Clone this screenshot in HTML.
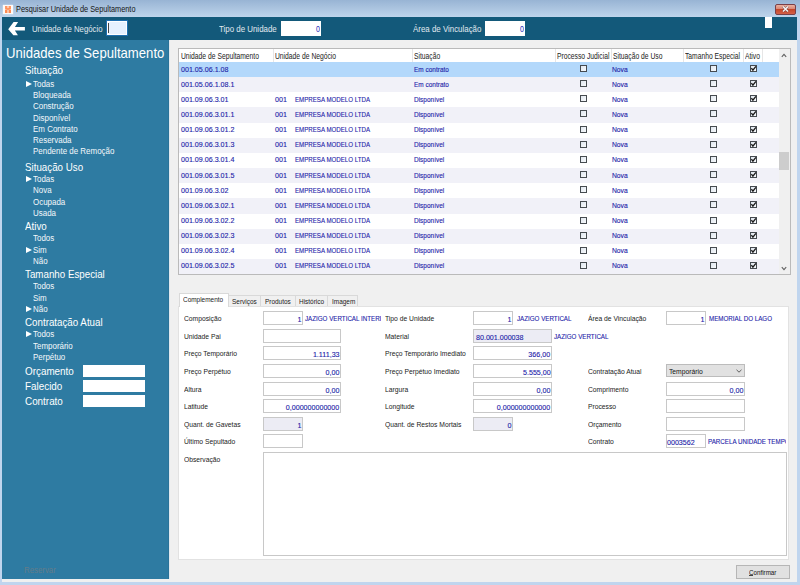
<!DOCTYPE html>
<html><head><meta charset="utf-8"><style>
html,body{margin:0;padding:0;width:800px;height:585px;overflow:hidden;background:#f0f0f0}
body{position:relative;font-family:"Liberation Sans",sans-serif}
.t{position:absolute;white-space:nowrap;font-family:"Liberation Sans",sans-serif}
.b{-webkit-text-stroke:0.12px currentColor}
</style></head><body>
<div style="position:absolute;left:0;top:0;width:800px;height:17px;background:linear-gradient(#98b4d4,#bed4eb)"></div>
<div style="position:absolute;left:0px;top:17px;width:2px;height:568px;background:#c0d5ee"></div>
<div style="position:absolute;left:797px;top:17px;width:3px;height:568px;background:#c0d5ee"></div>
<div style="position:absolute;left:0px;top:582px;width:800px;height:3px;background:#c0d5ee"></div>
<div style="position:absolute;left:3px;top:5px;width:10px;height:9px;background:#fdfaf8;box-shadow:0 0 1px #fff"></div>
<svg style="position:absolute;left:5px;top:6px" width="6" height="7" viewBox="0 0 6 7"><g fill="#ff8040"><rect x="0" y="0" width="2.5" height="3" opacity="0.8"/><rect x="3.5" y="0" width="2.5" height="3" opacity="0.8"/><rect x="0" y="3.5" width="2.5" height="3.5" opacity="0.9"/><rect x="3.5" y="3.5" width="2.5" height="3.5" opacity="0.9"/><rect x="1.5" y="2" width="3" height="2" opacity="0.7"/></g></svg>
<div class="t" style="left:15.8px;top:5.38px;font-size:9px;line-height:9px;color:#151515;transform:scaleX(0.815);transform-origin:0 0;">Pesquisar Unidade de Sepultamento</div>
<div style="position:absolute;left:775px;top:4px;width:19px;height:9px;border:1px solid #7a4048;border-radius:2px;background:linear-gradient(#eab0a0 0%,#dc8a78 40%,#c4472a 50%,#d46048 100%)"></div>
<svg style="position:absolute;left:781px;top:5px" width="9" height="8" viewBox="0 0 9 8"><path d="M2 1.5 L7 6.5 M7 1.5 L2 6.5" stroke="#4a3038" stroke-width="2.6" stroke-linecap="butt" opacity="0.5"/><path d="M2 1.5 L7 6.5 M7 1.5 L2 6.5" stroke="#f4f4f4" stroke-width="1.5" stroke-linecap="butt"/></svg>
<div style="position:absolute;left:2px;top:17px;width:795px;height:23px;background:#13597a"></div>
<svg style="position:absolute;left:0;top:0" width="30" height="40" viewBox="0 0 30 40"><path d="M8.2 29.3 L13.6 22.1 L18.1 22.1 L14.9 27 L24.9 27 L24.9 30.6 L14.9 30.6 L17.9 35.3 L13.4 35.3 Z" fill="#fff"/></svg>
<div class="t" style="left:32px;top:24.80px;font-size:8.5px;line-height:8.5px;color:#e2eaf0;transform:scaleX(0.915);transform-origin:0 0;">Unidade de Negócio</div>
<div style="position:absolute;left:107px;top:21px;width:20px;height:14px;background:#e6f1ff;border:0;box-shadow:inset 0 0 0 1px #fff,0 0 0 1px rgba(40,130,220,0.55)"></div>
<div style="position:absolute;left:108px;top:23px;width:1px;height:10px;background:#444"></div>
<div class="t" style="left:218.5px;top:24.80px;font-size:8.5px;line-height:8.5px;color:#e2eaf0;transform:scaleX(0.93);transform-origin:0 0;">Tipo de Unidade</div>
<div style="position:absolute;left:281px;top:21px;width:40px;height:15px;background:#fff"></div>
<div class="t" style="right:479.7px;top:24.85px;font-size:8.8px;line-height:8.8px;color:#2828b8;transform:scaleX(0.8);transform-origin:100% 0;">0</div>
<div class="t" style="left:412.5px;top:24.80px;font-size:8.5px;line-height:8.5px;color:#e2eaf0;transform:scaleX(0.93);transform-origin:0 0;">Área de Vinculação</div>
<div style="position:absolute;left:485px;top:21px;width:40px;height:15px;background:#fff"></div>
<div class="t" style="right:275.70000000000005px;top:24.85px;font-size:8.8px;line-height:8.8px;color:#2828b8;transform:scaleX(0.8);transform-origin:100% 0;">0</div>
<div style="position:absolute;left:765px;top:17px;width:7px;height:11px;background:#fff"></div>
<div style="position:absolute;left:2px;top:40px;width:167px;height:539px;background:#2e7ba2"></div>
<div style="position:absolute;left:168px;top:40px;width:1px;height:539px;background:#2a7399"></div>
<div style="position:absolute;left:169px;top:40px;width:1px;height:539px;background:#dfe8ee"></div>
<div style="position:absolute;left:2px;top:579px;width:795px;height:3px;background:#f0f0f0"></div>
<div class="t" style="left:6.4px;top:45.78px;font-size:14.2px;line-height:14.2px;color:#fff;transform:scaleX(0.925);transform-origin:0 0;">Unidades de Sepultamento</div>
<div class="t" style="left:24.5px;top:64.81px;font-size:10.5px;line-height:10.5px;color:#fff;transform:scaleX(0.93);transform-origin:0 0;">Situação</div>
<div class="t" style="left:33.1px;top:79.69px;font-size:8.4px;line-height:8.4px;color:#f4f8fb;transform:scaleX(0.95);transform-origin:0 0;">Todas</div>
<svg style="position:absolute;left:26px;top:80.8px" width="6" height="6" viewBox="0 0 6 6"><path d="M0 0 L6 3 L0 6 Z" fill="#fff"/></svg>
<div class="t" style="left:33.1px;top:90.99px;font-size:8.4px;line-height:8.4px;color:#f4f8fb;transform:scaleX(0.95);transform-origin:0 0;">Bloqueada</div>
<div class="t" style="left:33.1px;top:102.29px;font-size:8.4px;line-height:8.4px;color:#f4f8fb;transform:scaleX(0.95);transform-origin:0 0;">Construção</div>
<div class="t" style="left:33.1px;top:113.59px;font-size:8.4px;line-height:8.4px;color:#f4f8fb;transform:scaleX(0.95);transform-origin:0 0;">Disponível</div>
<div class="t" style="left:33.1px;top:124.89px;font-size:8.4px;line-height:8.4px;color:#f4f8fb;transform:scaleX(0.95);transform-origin:0 0;">Em Contrato</div>
<div class="t" style="left:33.1px;top:136.19px;font-size:8.4px;line-height:8.4px;color:#f4f8fb;transform:scaleX(0.95);transform-origin:0 0;">Reservada</div>
<div class="t" style="left:33.1px;top:147.49px;font-size:8.4px;line-height:8.4px;color:#f4f8fb;transform:scaleX(0.95);transform-origin:0 0;">Pendente de Remoção</div>
<div class="t" style="left:24.5px;top:161.81px;font-size:10.5px;line-height:10.5px;color:#fff;transform:scaleX(0.93);transform-origin:0 0;">Situação Uso</div>
<div class="t" style="left:33.1px;top:175.19px;font-size:8.4px;line-height:8.4px;color:#f4f8fb;transform:scaleX(0.95);transform-origin:0 0;">Todas</div>
<svg style="position:absolute;left:26px;top:176.3px" width="6" height="6" viewBox="0 0 6 6"><path d="M0 0 L6 3 L0 6 Z" fill="#fff"/></svg>
<div class="t" style="left:33.1px;top:186.49px;font-size:8.4px;line-height:8.4px;color:#f4f8fb;transform:scaleX(0.95);transform-origin:0 0;">Nova</div>
<div class="t" style="left:33.1px;top:197.79px;font-size:8.4px;line-height:8.4px;color:#f4f8fb;transform:scaleX(0.95);transform-origin:0 0;">Ocupada</div>
<div class="t" style="left:33.1px;top:209.09px;font-size:8.4px;line-height:8.4px;color:#f4f8fb;transform:scaleX(0.95);transform-origin:0 0;">Usada</div>
<div class="t" style="left:24.5px;top:221.31px;font-size:10.5px;line-height:10.5px;color:#fff;transform:scaleX(0.93);transform-origin:0 0;">Ativo</div>
<div class="t" style="left:33.1px;top:234.39px;font-size:8.4px;line-height:8.4px;color:#f4f8fb;transform:scaleX(0.95);transform-origin:0 0;">Todos</div>
<div class="t" style="left:33.1px;top:245.69px;font-size:8.4px;line-height:8.4px;color:#f4f8fb;transform:scaleX(0.95);transform-origin:0 0;">Sim</div>
<svg style="position:absolute;left:26px;top:246.8px" width="6" height="6" viewBox="0 0 6 6"><path d="M0 0 L6 3 L0 6 Z" fill="#fff"/></svg>
<div class="t" style="left:33.1px;top:257.09px;font-size:8.4px;line-height:8.4px;color:#f4f8fb;transform:scaleX(0.95);transform-origin:0 0;">Não</div>
<div class="t" style="left:24.5px;top:269.21px;font-size:10.5px;line-height:10.5px;color:#fff;transform:scaleX(0.93);transform-origin:0 0;">Tamanho Especial</div>
<div class="t" style="left:33.1px;top:282.39px;font-size:8.4px;line-height:8.4px;color:#f4f8fb;transform:scaleX(0.95);transform-origin:0 0;">Todos</div>
<div class="t" style="left:33.1px;top:293.69px;font-size:8.4px;line-height:8.4px;color:#f4f8fb;transform:scaleX(0.95);transform-origin:0 0;">Sim</div>
<div class="t" style="left:33.1px;top:305.09px;font-size:8.4px;line-height:8.4px;color:#f4f8fb;transform:scaleX(0.95);transform-origin:0 0;">Não</div>
<svg style="position:absolute;left:26px;top:306.2px" width="6" height="6" viewBox="0 0 6 6"><path d="M0 0 L6 3 L0 6 Z" fill="#fff"/></svg>
<div class="t" style="left:24.5px;top:317.11px;font-size:10.5px;line-height:10.5px;color:#fff;transform:scaleX(0.93);transform-origin:0 0;">Contratação Atual</div>
<div class="t" style="left:33.1px;top:330.19px;font-size:8.4px;line-height:8.4px;color:#f4f8fb;transform:scaleX(0.95);transform-origin:0 0;">Todos</div>
<svg style="position:absolute;left:26px;top:331.3px" width="6" height="6" viewBox="0 0 6 6"><path d="M0 0 L6 3 L0 6 Z" fill="#fff"/></svg>
<div class="t" style="left:33.1px;top:341.59px;font-size:8.4px;line-height:8.4px;color:#f4f8fb;transform:scaleX(0.95);transform-origin:0 0;">Temporário</div>
<div class="t" style="left:33.1px;top:352.99px;font-size:8.4px;line-height:8.4px;color:#f4f8fb;transform:scaleX(0.95);transform-origin:0 0;">Perpétuo</div>
<div class="t" style="left:24.5px;top:365.61px;font-size:10.5px;line-height:10.5px;color:#fff;transform:scaleX(0.94);transform-origin:0 0;">Orçamento</div>
<div style="position:absolute;left:83px;top:365px;width:62px;height:12px;background:#fff"></div>
<div class="t" style="left:24.5px;top:380.61px;font-size:10.5px;line-height:10.5px;color:#fff;transform:scaleX(0.94);transform-origin:0 0;">Falecido</div>
<div style="position:absolute;left:83px;top:380px;width:62px;height:12px;background:#fff"></div>
<div class="t" style="left:24.5px;top:395.61px;font-size:10.5px;line-height:10.5px;color:#fff;transform:scaleX(0.94);transform-origin:0 0;">Contrato</div>
<div style="position:absolute;left:83px;top:395px;width:62px;height:12px;background:#fff"></div>
<div class="t" style="left:24.3px;top:565.68px;font-size:9px;line-height:9px;color:#637c8a;transform:scaleX(0.87);transform-origin:0 0;">Reservar</div>
<div style="position:absolute;left:170px;top:40px;width:627px;height:539px;background:#f0f0f0"></div>
<div style="position:absolute;left:178px;top:48px;width:613px;height:227px;background:#fff;border:1px solid #bababa;box-sizing:border-box"></div>
<div style="position:absolute;left:273px;top:49px;width:1px;height:13px;background:#e6e6e6"></div>
<div style="position:absolute;left:412px;top:49px;width:1px;height:13px;background:#e6e6e6"></div>
<div style="position:absolute;left:555px;top:49px;width:1px;height:13px;background:#e6e6e6"></div>
<div style="position:absolute;left:611px;top:49px;width:1px;height:13px;background:#e6e6e6"></div>
<div style="position:absolute;left:683px;top:49px;width:1px;height:13px;background:#e6e6e6"></div>
<div style="position:absolute;left:743px;top:49px;width:1px;height:13px;background:#e6e6e6"></div>
<div style="position:absolute;left:762px;top:49px;width:1px;height:13px;background:#e6e6e6"></div>
<div class="t" style="left:181.3px;top:52.22px;font-size:8.6px;line-height:8.6px;color:#222;transform:scaleX(0.7848837209302326);transform-origin:0 0;">Unidade de Sepultamento</div>
<div class="t" style="left:275.3px;top:52.22px;font-size:8.6px;line-height:8.6px;color:#222;transform:scaleX(0.7848837209302326);transform-origin:0 0;">Unidade de Negócio</div>
<div class="t" style="left:414.3px;top:52.22px;font-size:8.6px;line-height:8.6px;color:#222;transform:scaleX(0.7848837209302326);transform-origin:0 0;">Situação</div>
<div class="t" style="left:557.3px;top:52.22px;font-size:8.6px;line-height:8.6px;color:#222;transform:scaleX(0.7848837209302326);transform-origin:0 0;">Processo Judicial</div>
<div class="t" style="left:613.3px;top:52.22px;font-size:8.6px;line-height:8.6px;color:#222;transform:scaleX(0.7848837209302326);transform-origin:0 0;">Situação de Uso</div>
<div class="t" style="left:685.3px;top:52.22px;font-size:8.6px;line-height:8.6px;color:#222;transform:scaleX(0.7848837209302326);transform-origin:0 0;">Tamanho Especial</div>
<div class="t" style="left:745.3px;top:52.22px;font-size:8.6px;line-height:8.6px;color:#222;transform:scaleX(0.7848837209302326);transform-origin:0 0;">Ativo</div>
<div style="position:absolute;left:179px;top:62px;width:600px;height:15px;background:#b3d8fb"></div>
<div class="t b" style="left:180.5px;top:65.51px;font-size:7.9px;line-height:7.9px;color:#2222a8;transform:scaleX(0.9018987341772151);transform-origin:0 0;">001.05.06.1.08</div>
<div class="t b" style="left:413.5px;top:65.51px;font-size:7.9px;line-height:7.9px;color:#2222a8;transform:scaleX(0.8212025316455696);transform-origin:0 0;">Em contrato</div>
<div class="t b" style="left:612px;top:65.51px;font-size:7.9px;line-height:7.9px;color:#2222a8;transform:scaleX(0.8544303797468354);transform-origin:0 0;">Nova</div>
<div style="position:absolute;left:580px;top:65px;width:7px;height:7px;box-sizing:border-box;border:1px solid #464b50;background:linear-gradient(135deg,#dfe6ee,#f8fafc)"></div>
<div style="position:absolute;left:710px;top:65px;width:7px;height:7px;box-sizing:border-box;border:1px solid #464b50;background:linear-gradient(135deg,#dfe6ee,#f8fafc)"></div>
<div style="position:absolute;left:750px;top:65px;width:7px;height:7px;box-sizing:border-box;border:1px solid #464b50;background:linear-gradient(135deg,#dfe6ee,#f8fafc)"></div>
<svg style="position:absolute;left:750px;top:65px" width="7" height="7" viewBox="0 0 7 7"><path d="M1.4 3.2 L2.9 5.1 L5.9 1.3" stroke="#1a1a1a" stroke-width="1.35" fill="none"/></svg>
<div style="position:absolute;left:179px;top:77px;width:600px;height:15px;background:#f1f1f8"></div>
<div class="t b" style="left:180.5px;top:80.66px;font-size:7.9px;line-height:7.9px;color:#2222a8;transform:scaleX(0.9018987341772151);transform-origin:0 0;">001.05.06.1.08.1</div>
<div class="t b" style="left:413.5px;top:80.66px;font-size:7.9px;line-height:7.9px;color:#2222a8;transform:scaleX(0.8212025316455696);transform-origin:0 0;">Em contrato</div>
<div class="t b" style="left:612px;top:80.66px;font-size:7.9px;line-height:7.9px;color:#2222a8;transform:scaleX(0.8544303797468354);transform-origin:0 0;">Nova</div>
<div style="position:absolute;left:580px;top:80px;width:7px;height:7px;box-sizing:border-box;border:1px solid #464b50;background:linear-gradient(135deg,#dfe6ee,#f8fafc)"></div>
<div style="position:absolute;left:710px;top:80px;width:7px;height:7px;box-sizing:border-box;border:1px solid #464b50;background:linear-gradient(135deg,#dfe6ee,#f8fafc)"></div>
<div style="position:absolute;left:750px;top:80px;width:7px;height:7px;box-sizing:border-box;border:1px solid #464b50;background:linear-gradient(135deg,#dfe6ee,#f8fafc)"></div>
<svg style="position:absolute;left:750px;top:80px" width="7" height="7" viewBox="0 0 7 7"><path d="M1.4 3.2 L2.9 5.1 L5.9 1.3" stroke="#1a1a1a" stroke-width="1.35" fill="none"/></svg>
<div style="position:absolute;left:179px;top:92px;width:600px;height:15px;background:#fff"></div>
<div class="t b" style="left:180.5px;top:95.81px;font-size:7.9px;line-height:7.9px;color:#2222a8;transform:scaleX(0.9018987341772151);transform-origin:0 0;">001.09.06.3.01</div>
<div class="t b" style="left:274.5px;top:95.81px;font-size:7.9px;line-height:7.9px;color:#2222a8;transform:scaleX(0.9018987341772151);transform-origin:0 0;">001</div>
<div class="t b" style="left:294.5px;top:95.81px;font-size:7.9px;line-height:7.9px;color:#2222a8;transform:scaleX(0.7784810126582278);transform-origin:0 0;">EMPRESA MODELO LTDA</div>
<div class="t b" style="left:413.5px;top:95.81px;font-size:7.9px;line-height:7.9px;color:#2222a8;transform:scaleX(0.8212025316455696);transform-origin:0 0;">Disponível</div>
<div class="t b" style="left:612px;top:95.81px;font-size:7.9px;line-height:7.9px;color:#2222a8;transform:scaleX(0.8544303797468354);transform-origin:0 0;">Nova</div>
<div style="position:absolute;left:580px;top:95px;width:7px;height:7px;box-sizing:border-box;border:1px solid #464b50;background:linear-gradient(135deg,#dfe6ee,#f8fafc)"></div>
<div style="position:absolute;left:710px;top:95px;width:7px;height:7px;box-sizing:border-box;border:1px solid #464b50;background:linear-gradient(135deg,#dfe6ee,#f8fafc)"></div>
<div style="position:absolute;left:750px;top:95px;width:7px;height:7px;box-sizing:border-box;border:1px solid #464b50;background:linear-gradient(135deg,#dfe6ee,#f8fafc)"></div>
<svg style="position:absolute;left:750px;top:95px" width="7" height="7" viewBox="0 0 7 7"><path d="M1.4 3.2 L2.9 5.1 L5.9 1.3" stroke="#1a1a1a" stroke-width="1.35" fill="none"/></svg>
<div style="position:absolute;left:179px;top:107px;width:600px;height:16px;background:#f1f1f8"></div>
<div class="t b" style="left:180.5px;top:110.96px;font-size:7.9px;line-height:7.9px;color:#2222a8;transform:scaleX(0.9018987341772151);transform-origin:0 0;">001.09.06.3.01.1</div>
<div class="t b" style="left:274.5px;top:110.96px;font-size:7.9px;line-height:7.9px;color:#2222a8;transform:scaleX(0.9018987341772151);transform-origin:0 0;">001</div>
<div class="t b" style="left:294.5px;top:110.96px;font-size:7.9px;line-height:7.9px;color:#2222a8;transform:scaleX(0.7784810126582278);transform-origin:0 0;">EMPRESA MODELO LTDA</div>
<div class="t b" style="left:413.5px;top:110.96px;font-size:7.9px;line-height:7.9px;color:#2222a8;transform:scaleX(0.8212025316455696);transform-origin:0 0;">Disponível</div>
<div class="t b" style="left:612px;top:110.96px;font-size:7.9px;line-height:7.9px;color:#2222a8;transform:scaleX(0.8544303797468354);transform-origin:0 0;">Nova</div>
<div style="position:absolute;left:580px;top:110px;width:7px;height:7px;box-sizing:border-box;border:1px solid #464b50;background:linear-gradient(135deg,#dfe6ee,#f8fafc)"></div>
<div style="position:absolute;left:710px;top:110px;width:7px;height:7px;box-sizing:border-box;border:1px solid #464b50;background:linear-gradient(135deg,#dfe6ee,#f8fafc)"></div>
<div style="position:absolute;left:750px;top:110px;width:7px;height:7px;box-sizing:border-box;border:1px solid #464b50;background:linear-gradient(135deg,#dfe6ee,#f8fafc)"></div>
<svg style="position:absolute;left:750px;top:110px" width="7" height="7" viewBox="0 0 7 7"><path d="M1.4 3.2 L2.9 5.1 L5.9 1.3" stroke="#1a1a1a" stroke-width="1.35" fill="none"/></svg>
<div style="position:absolute;left:179px;top:123px;width:600px;height:15px;background:#fff"></div>
<div class="t b" style="left:180.5px;top:126.11px;font-size:7.9px;line-height:7.9px;color:#2222a8;transform:scaleX(0.9018987341772151);transform-origin:0 0;">001.09.06.3.01.2</div>
<div class="t b" style="left:274.5px;top:126.11px;font-size:7.9px;line-height:7.9px;color:#2222a8;transform:scaleX(0.9018987341772151);transform-origin:0 0;">001</div>
<div class="t b" style="left:294.5px;top:126.11px;font-size:7.9px;line-height:7.9px;color:#2222a8;transform:scaleX(0.7784810126582278);transform-origin:0 0;">EMPRESA MODELO LTDA</div>
<div class="t b" style="left:413.5px;top:126.11px;font-size:7.9px;line-height:7.9px;color:#2222a8;transform:scaleX(0.8212025316455696);transform-origin:0 0;">Disponível</div>
<div class="t b" style="left:612px;top:126.11px;font-size:7.9px;line-height:7.9px;color:#2222a8;transform:scaleX(0.8544303797468354);transform-origin:0 0;">Nova</div>
<div style="position:absolute;left:580px;top:126px;width:7px;height:7px;box-sizing:border-box;border:1px solid #464b50;background:linear-gradient(135deg,#dfe6ee,#f8fafc)"></div>
<div style="position:absolute;left:710px;top:126px;width:7px;height:7px;box-sizing:border-box;border:1px solid #464b50;background:linear-gradient(135deg,#dfe6ee,#f8fafc)"></div>
<div style="position:absolute;left:750px;top:126px;width:7px;height:7px;box-sizing:border-box;border:1px solid #464b50;background:linear-gradient(135deg,#dfe6ee,#f8fafc)"></div>
<svg style="position:absolute;left:750px;top:126px" width="7" height="7" viewBox="0 0 7 7"><path d="M1.4 3.2 L2.9 5.1 L5.9 1.3" stroke="#1a1a1a" stroke-width="1.35" fill="none"/></svg>
<div style="position:absolute;left:179px;top:138px;width:600px;height:15px;background:#f1f1f8"></div>
<div class="t b" style="left:180.5px;top:141.26px;font-size:7.9px;line-height:7.9px;color:#2222a8;transform:scaleX(0.9018987341772151);transform-origin:0 0;">001.09.06.3.01.3</div>
<div class="t b" style="left:274.5px;top:141.26px;font-size:7.9px;line-height:7.9px;color:#2222a8;transform:scaleX(0.9018987341772151);transform-origin:0 0;">001</div>
<div class="t b" style="left:294.5px;top:141.26px;font-size:7.9px;line-height:7.9px;color:#2222a8;transform:scaleX(0.7784810126582278);transform-origin:0 0;">EMPRESA MODELO LTDA</div>
<div class="t b" style="left:413.5px;top:141.26px;font-size:7.9px;line-height:7.9px;color:#2222a8;transform:scaleX(0.8212025316455696);transform-origin:0 0;">Disponível</div>
<div class="t b" style="left:612px;top:141.26px;font-size:7.9px;line-height:7.9px;color:#2222a8;transform:scaleX(0.8544303797468354);transform-origin:0 0;">Nova</div>
<div style="position:absolute;left:580px;top:141px;width:7px;height:7px;box-sizing:border-box;border:1px solid #464b50;background:linear-gradient(135deg,#dfe6ee,#f8fafc)"></div>
<div style="position:absolute;left:710px;top:141px;width:7px;height:7px;box-sizing:border-box;border:1px solid #464b50;background:linear-gradient(135deg,#dfe6ee,#f8fafc)"></div>
<div style="position:absolute;left:750px;top:141px;width:7px;height:7px;box-sizing:border-box;border:1px solid #464b50;background:linear-gradient(135deg,#dfe6ee,#f8fafc)"></div>
<svg style="position:absolute;left:750px;top:141px" width="7" height="7" viewBox="0 0 7 7"><path d="M1.4 3.2 L2.9 5.1 L5.9 1.3" stroke="#1a1a1a" stroke-width="1.35" fill="none"/></svg>
<div style="position:absolute;left:179px;top:153px;width:600px;height:15px;background:#fff"></div>
<div class="t b" style="left:180.5px;top:156.41px;font-size:7.9px;line-height:7.9px;color:#2222a8;transform:scaleX(0.9018987341772151);transform-origin:0 0;">001.09.06.3.01.4</div>
<div class="t b" style="left:274.5px;top:156.41px;font-size:7.9px;line-height:7.9px;color:#2222a8;transform:scaleX(0.9018987341772151);transform-origin:0 0;">001</div>
<div class="t b" style="left:294.5px;top:156.41px;font-size:7.9px;line-height:7.9px;color:#2222a8;transform:scaleX(0.7784810126582278);transform-origin:0 0;">EMPRESA MODELO LTDA</div>
<div class="t b" style="left:413.5px;top:156.41px;font-size:7.9px;line-height:7.9px;color:#2222a8;transform:scaleX(0.8212025316455696);transform-origin:0 0;">Disponível</div>
<div class="t b" style="left:612px;top:156.41px;font-size:7.9px;line-height:7.9px;color:#2222a8;transform:scaleX(0.8544303797468354);transform-origin:0 0;">Nova</div>
<div style="position:absolute;left:580px;top:156px;width:7px;height:7px;box-sizing:border-box;border:1px solid #464b50;background:linear-gradient(135deg,#dfe6ee,#f8fafc)"></div>
<div style="position:absolute;left:710px;top:156px;width:7px;height:7px;box-sizing:border-box;border:1px solid #464b50;background:linear-gradient(135deg,#dfe6ee,#f8fafc)"></div>
<div style="position:absolute;left:750px;top:156px;width:7px;height:7px;box-sizing:border-box;border:1px solid #464b50;background:linear-gradient(135deg,#dfe6ee,#f8fafc)"></div>
<svg style="position:absolute;left:750px;top:156px" width="7" height="7" viewBox="0 0 7 7"><path d="M1.4 3.2 L2.9 5.1 L5.9 1.3" stroke="#1a1a1a" stroke-width="1.35" fill="none"/></svg>
<div style="position:absolute;left:179px;top:168px;width:600px;height:15px;background:#f1f1f8"></div>
<div class="t b" style="left:180.5px;top:171.56px;font-size:7.9px;line-height:7.9px;color:#2222a8;transform:scaleX(0.9018987341772151);transform-origin:0 0;">001.09.06.3.01.5</div>
<div class="t b" style="left:274.5px;top:171.56px;font-size:7.9px;line-height:7.9px;color:#2222a8;transform:scaleX(0.9018987341772151);transform-origin:0 0;">001</div>
<div class="t b" style="left:294.5px;top:171.56px;font-size:7.9px;line-height:7.9px;color:#2222a8;transform:scaleX(0.7784810126582278);transform-origin:0 0;">EMPRESA MODELO LTDA</div>
<div class="t b" style="left:413.5px;top:171.56px;font-size:7.9px;line-height:7.9px;color:#2222a8;transform:scaleX(0.8212025316455696);transform-origin:0 0;">Disponível</div>
<div class="t b" style="left:612px;top:171.56px;font-size:7.9px;line-height:7.9px;color:#2222a8;transform:scaleX(0.8544303797468354);transform-origin:0 0;">Nova</div>
<div style="position:absolute;left:580px;top:171px;width:7px;height:7px;box-sizing:border-box;border:1px solid #464b50;background:linear-gradient(135deg,#dfe6ee,#f8fafc)"></div>
<div style="position:absolute;left:710px;top:171px;width:7px;height:7px;box-sizing:border-box;border:1px solid #464b50;background:linear-gradient(135deg,#dfe6ee,#f8fafc)"></div>
<div style="position:absolute;left:750px;top:171px;width:7px;height:7px;box-sizing:border-box;border:1px solid #464b50;background:linear-gradient(135deg,#dfe6ee,#f8fafc)"></div>
<svg style="position:absolute;left:750px;top:171px" width="7" height="7" viewBox="0 0 7 7"><path d="M1.4 3.2 L2.9 5.1 L5.9 1.3" stroke="#1a1a1a" stroke-width="1.35" fill="none"/></svg>
<div style="position:absolute;left:179px;top:183px;width:600px;height:15px;background:#fff"></div>
<div class="t b" style="left:180.5px;top:186.71px;font-size:7.9px;line-height:7.9px;color:#2222a8;transform:scaleX(0.9018987341772151);transform-origin:0 0;">001.09.06.3.02</div>
<div class="t b" style="left:274.5px;top:186.71px;font-size:7.9px;line-height:7.9px;color:#2222a8;transform:scaleX(0.9018987341772151);transform-origin:0 0;">001</div>
<div class="t b" style="left:294.5px;top:186.71px;font-size:7.9px;line-height:7.9px;color:#2222a8;transform:scaleX(0.7784810126582278);transform-origin:0 0;">EMPRESA MODELO LTDA</div>
<div class="t b" style="left:413.5px;top:186.71px;font-size:7.9px;line-height:7.9px;color:#2222a8;transform:scaleX(0.8212025316455696);transform-origin:0 0;">Disponível</div>
<div class="t b" style="left:612px;top:186.71px;font-size:7.9px;line-height:7.9px;color:#2222a8;transform:scaleX(0.8544303797468354);transform-origin:0 0;">Nova</div>
<div style="position:absolute;left:580px;top:186px;width:7px;height:7px;box-sizing:border-box;border:1px solid #464b50;background:linear-gradient(135deg,#dfe6ee,#f8fafc)"></div>
<div style="position:absolute;left:710px;top:186px;width:7px;height:7px;box-sizing:border-box;border:1px solid #464b50;background:linear-gradient(135deg,#dfe6ee,#f8fafc)"></div>
<div style="position:absolute;left:750px;top:186px;width:7px;height:7px;box-sizing:border-box;border:1px solid #464b50;background:linear-gradient(135deg,#dfe6ee,#f8fafc)"></div>
<svg style="position:absolute;left:750px;top:186px" width="7" height="7" viewBox="0 0 7 7"><path d="M1.4 3.2 L2.9 5.1 L5.9 1.3" stroke="#1a1a1a" stroke-width="1.35" fill="none"/></svg>
<div style="position:absolute;left:179px;top:198px;width:600px;height:16px;background:#f1f1f8"></div>
<div class="t b" style="left:180.5px;top:201.86px;font-size:7.9px;line-height:7.9px;color:#2222a8;transform:scaleX(0.9018987341772151);transform-origin:0 0;">001.09.06.3.02.1</div>
<div class="t b" style="left:274.5px;top:201.86px;font-size:7.9px;line-height:7.9px;color:#2222a8;transform:scaleX(0.9018987341772151);transform-origin:0 0;">001</div>
<div class="t b" style="left:294.5px;top:201.86px;font-size:7.9px;line-height:7.9px;color:#2222a8;transform:scaleX(0.7784810126582278);transform-origin:0 0;">EMPRESA MODELO LTDA</div>
<div class="t b" style="left:413.5px;top:201.86px;font-size:7.9px;line-height:7.9px;color:#2222a8;transform:scaleX(0.8212025316455696);transform-origin:0 0;">Disponível</div>
<div class="t b" style="left:612px;top:201.86px;font-size:7.9px;line-height:7.9px;color:#2222a8;transform:scaleX(0.8544303797468354);transform-origin:0 0;">Nova</div>
<div style="position:absolute;left:580px;top:201px;width:7px;height:7px;box-sizing:border-box;border:1px solid #464b50;background:linear-gradient(135deg,#dfe6ee,#f8fafc)"></div>
<div style="position:absolute;left:710px;top:201px;width:7px;height:7px;box-sizing:border-box;border:1px solid #464b50;background:linear-gradient(135deg,#dfe6ee,#f8fafc)"></div>
<div style="position:absolute;left:750px;top:201px;width:7px;height:7px;box-sizing:border-box;border:1px solid #464b50;background:linear-gradient(135deg,#dfe6ee,#f8fafc)"></div>
<svg style="position:absolute;left:750px;top:201px" width="7" height="7" viewBox="0 0 7 7"><path d="M1.4 3.2 L2.9 5.1 L5.9 1.3" stroke="#1a1a1a" stroke-width="1.35" fill="none"/></svg>
<div style="position:absolute;left:179px;top:214px;width:600px;height:15px;background:#fff"></div>
<div class="t b" style="left:180.5px;top:217.01px;font-size:7.9px;line-height:7.9px;color:#2222a8;transform:scaleX(0.9018987341772151);transform-origin:0 0;">001.09.06.3.02.2</div>
<div class="t b" style="left:274.5px;top:217.01px;font-size:7.9px;line-height:7.9px;color:#2222a8;transform:scaleX(0.9018987341772151);transform-origin:0 0;">001</div>
<div class="t b" style="left:294.5px;top:217.01px;font-size:7.9px;line-height:7.9px;color:#2222a8;transform:scaleX(0.7784810126582278);transform-origin:0 0;">EMPRESA MODELO LTDA</div>
<div class="t b" style="left:413.5px;top:217.01px;font-size:7.9px;line-height:7.9px;color:#2222a8;transform:scaleX(0.8212025316455696);transform-origin:0 0;">Disponível</div>
<div class="t b" style="left:612px;top:217.01px;font-size:7.9px;line-height:7.9px;color:#2222a8;transform:scaleX(0.8544303797468354);transform-origin:0 0;">Nova</div>
<div style="position:absolute;left:580px;top:217px;width:7px;height:7px;box-sizing:border-box;border:1px solid #464b50;background:linear-gradient(135deg,#dfe6ee,#f8fafc)"></div>
<div style="position:absolute;left:710px;top:217px;width:7px;height:7px;box-sizing:border-box;border:1px solid #464b50;background:linear-gradient(135deg,#dfe6ee,#f8fafc)"></div>
<div style="position:absolute;left:750px;top:217px;width:7px;height:7px;box-sizing:border-box;border:1px solid #464b50;background:linear-gradient(135deg,#dfe6ee,#f8fafc)"></div>
<svg style="position:absolute;left:750px;top:217px" width="7" height="7" viewBox="0 0 7 7"><path d="M1.4 3.2 L2.9 5.1 L5.9 1.3" stroke="#1a1a1a" stroke-width="1.35" fill="none"/></svg>
<div style="position:absolute;left:179px;top:229px;width:600px;height:15px;background:#f1f1f8"></div>
<div class="t b" style="left:180.5px;top:232.16px;font-size:7.9px;line-height:7.9px;color:#2222a8;transform:scaleX(0.9018987341772151);transform-origin:0 0;">001.09.06.3.02.3</div>
<div class="t b" style="left:274.5px;top:232.16px;font-size:7.9px;line-height:7.9px;color:#2222a8;transform:scaleX(0.9018987341772151);transform-origin:0 0;">001</div>
<div class="t b" style="left:294.5px;top:232.16px;font-size:7.9px;line-height:7.9px;color:#2222a8;transform:scaleX(0.7784810126582278);transform-origin:0 0;">EMPRESA MODELO LTDA</div>
<div class="t b" style="left:413.5px;top:232.16px;font-size:7.9px;line-height:7.9px;color:#2222a8;transform:scaleX(0.8212025316455696);transform-origin:0 0;">Disponível</div>
<div class="t b" style="left:612px;top:232.16px;font-size:7.9px;line-height:7.9px;color:#2222a8;transform:scaleX(0.8544303797468354);transform-origin:0 0;">Nova</div>
<div style="position:absolute;left:580px;top:232px;width:7px;height:7px;box-sizing:border-box;border:1px solid #464b50;background:linear-gradient(135deg,#dfe6ee,#f8fafc)"></div>
<div style="position:absolute;left:710px;top:232px;width:7px;height:7px;box-sizing:border-box;border:1px solid #464b50;background:linear-gradient(135deg,#dfe6ee,#f8fafc)"></div>
<div style="position:absolute;left:750px;top:232px;width:7px;height:7px;box-sizing:border-box;border:1px solid #464b50;background:linear-gradient(135deg,#dfe6ee,#f8fafc)"></div>
<svg style="position:absolute;left:750px;top:232px" width="7" height="7" viewBox="0 0 7 7"><path d="M1.4 3.2 L2.9 5.1 L5.9 1.3" stroke="#1a1a1a" stroke-width="1.35" fill="none"/></svg>
<div style="position:absolute;left:179px;top:244px;width:600px;height:15px;background:#fff"></div>
<div class="t b" style="left:180.5px;top:247.31px;font-size:7.9px;line-height:7.9px;color:#2222a8;transform:scaleX(0.9018987341772151);transform-origin:0 0;">001.09.06.3.02.4</div>
<div class="t b" style="left:274.5px;top:247.31px;font-size:7.9px;line-height:7.9px;color:#2222a8;transform:scaleX(0.9018987341772151);transform-origin:0 0;">001</div>
<div class="t b" style="left:294.5px;top:247.31px;font-size:7.9px;line-height:7.9px;color:#2222a8;transform:scaleX(0.7784810126582278);transform-origin:0 0;">EMPRESA MODELO LTDA</div>
<div class="t b" style="left:413.5px;top:247.31px;font-size:7.9px;line-height:7.9px;color:#2222a8;transform:scaleX(0.8212025316455696);transform-origin:0 0;">Disponível</div>
<div class="t b" style="left:612px;top:247.31px;font-size:7.9px;line-height:7.9px;color:#2222a8;transform:scaleX(0.8544303797468354);transform-origin:0 0;">Nova</div>
<div style="position:absolute;left:580px;top:247px;width:7px;height:7px;box-sizing:border-box;border:1px solid #464b50;background:linear-gradient(135deg,#dfe6ee,#f8fafc)"></div>
<div style="position:absolute;left:710px;top:247px;width:7px;height:7px;box-sizing:border-box;border:1px solid #464b50;background:linear-gradient(135deg,#dfe6ee,#f8fafc)"></div>
<div style="position:absolute;left:750px;top:247px;width:7px;height:7px;box-sizing:border-box;border:1px solid #464b50;background:linear-gradient(135deg,#dfe6ee,#f8fafc)"></div>
<svg style="position:absolute;left:750px;top:247px" width="7" height="7" viewBox="0 0 7 7"><path d="M1.4 3.2 L2.9 5.1 L5.9 1.3" stroke="#1a1a1a" stroke-width="1.35" fill="none"/></svg>
<div style="position:absolute;left:179px;top:259px;width:600px;height:15px;background:#f1f1f8"></div>
<div class="t b" style="left:180.5px;top:262.46px;font-size:7.9px;line-height:7.9px;color:#2222a8;transform:scaleX(0.9018987341772151);transform-origin:0 0;">001.09.06.3.02.5</div>
<div class="t b" style="left:274.5px;top:262.46px;font-size:7.9px;line-height:7.9px;color:#2222a8;transform:scaleX(0.9018987341772151);transform-origin:0 0;">001</div>
<div class="t b" style="left:294.5px;top:262.46px;font-size:7.9px;line-height:7.9px;color:#2222a8;transform:scaleX(0.7784810126582278);transform-origin:0 0;">EMPRESA MODELO LTDA</div>
<div class="t b" style="left:413.5px;top:262.46px;font-size:7.9px;line-height:7.9px;color:#2222a8;transform:scaleX(0.8212025316455696);transform-origin:0 0;">Disponível</div>
<div class="t b" style="left:612px;top:262.46px;font-size:7.9px;line-height:7.9px;color:#2222a8;transform:scaleX(0.8544303797468354);transform-origin:0 0;">Nova</div>
<div style="position:absolute;left:580px;top:262px;width:7px;height:7px;box-sizing:border-box;border:1px solid #464b50;background:linear-gradient(135deg,#dfe6ee,#f8fafc)"></div>
<div style="position:absolute;left:710px;top:262px;width:7px;height:7px;box-sizing:border-box;border:1px solid #464b50;background:linear-gradient(135deg,#dfe6ee,#f8fafc)"></div>
<div style="position:absolute;left:750px;top:262px;width:7px;height:7px;box-sizing:border-box;border:1px solid #464b50;background:linear-gradient(135deg,#dfe6ee,#f8fafc)"></div>
<svg style="position:absolute;left:750px;top:262px" width="7" height="7" viewBox="0 0 7 7"><path d="M1.4 3.2 L2.9 5.1 L5.9 1.3" stroke="#1a1a1a" stroke-width="1.35" fill="none"/></svg>
<div style="position:absolute;left:779px;top:49px;width:11px;height:225px;background:#f0f0f0"></div>
<div style="position:absolute;left:779px;top:152px;width:10px;height:18px;background:#cdcdcd"></div>
<svg style="position:absolute;left:781px;top:53px" width="6" height="5" viewBox="0 0 6 5"><path d="M0.8 3.8 L3 1.4 L5.2 3.8" stroke="#606060" stroke-width="1.1" fill="none"/></svg>
<svg style="position:absolute;left:781px;top:266px" width="6" height="5" viewBox="0 0 6 5"><path d="M0.8 1.2 L3 3.6 L5.2 1.2" stroke="#606060" stroke-width="1.1" fill="none"/></svg>
<div style="position:absolute;left:178px;top:306px;width:611px;height:254px;background:#fff;border:1px solid #e2e2e2;box-sizing:border-box"></div>
<div style="position:absolute;left:228px;top:295px;width:32px;height:11px;background:#f0f0f0;border-left:1px solid #d9d9d9;border-top:1px solid #d9d9d9;box-sizing:border-box"></div>
<div class="t" style="left:231.5px;top:297.81px;font-size:7.9px;line-height:7.9px;color:#222;transform:scaleX(0.8164556962025317);transform-origin:0 0;">Serviços</div>
<div style="position:absolute;left:260px;top:295px;width:35px;height:11px;background:#f0f0f0;border-left:1px solid #d9d9d9;border-top:1px solid #d9d9d9;box-sizing:border-box"></div>
<div class="t" style="left:264.5px;top:297.81px;font-size:7.9px;line-height:7.9px;color:#222;transform:scaleX(0.8164556962025317);transform-origin:0 0;">Produtos</div>
<div style="position:absolute;left:295px;top:295px;width:32px;height:11px;background:#f0f0f0;border-left:1px solid #d9d9d9;border-top:1px solid #d9d9d9;box-sizing:border-box"></div>
<div class="t" style="left:298.5px;top:297.81px;font-size:7.9px;line-height:7.9px;color:#222;transform:scaleX(0.8164556962025317);transform-origin:0 0;">Histórico</div>
<div style="position:absolute;left:327px;top:295px;width:31px;height:11px;background:#f0f0f0;border-left:1px solid #d9d9d9;border-top:1px solid #d9d9d9;border-right:1px solid #d9d9d9;box-sizing:border-box"></div>
<div class="t" style="left:331.5px;top:297.81px;font-size:7.9px;line-height:7.9px;color:#222;transform:scaleX(0.8164556962025317);transform-origin:0 0;">Imagem</div>
<div style="position:absolute;left:179px;top:293px;width:50px;height:14px;background:#fff;border:1px solid #d9d9d9;border-bottom:0;box-sizing:border-box"></div>
<div class="t" style="left:183px;top:296.31px;font-size:7.9px;line-height:7.9px;color:#222;transform:scaleX(0.8164556962025317);transform-origin:0 0;">Complemento</div>
<div class="t" style="left:184px;top:315.31px;font-size:7.9px;line-height:7.9px;color:#222;transform:scaleX(0.8544303797468354);transform-origin:0 0;">Composição</div>
<div class="t" style="left:184px;top:333.31px;font-size:7.9px;line-height:7.9px;color:#222;transform:scaleX(0.8544303797468354);transform-origin:0 0;">Unidade Pai</div>
<div class="t" style="left:184px;top:350.31px;font-size:7.9px;line-height:7.9px;color:#222;transform:scaleX(0.8544303797468354);transform-origin:0 0;">Preço Temporário</div>
<div class="t" style="left:184px;top:368.31px;font-size:7.9px;line-height:7.9px;color:#222;transform:scaleX(0.8544303797468354);transform-origin:0 0;">Preço Perpétuo</div>
<div class="t" style="left:184px;top:386.31px;font-size:7.9px;line-height:7.9px;color:#222;transform:scaleX(0.8544303797468354);transform-origin:0 0;">Altura</div>
<div class="t" style="left:184px;top:403.31px;font-size:7.9px;line-height:7.9px;color:#222;transform:scaleX(0.8544303797468354);transform-origin:0 0;">Latitude</div>
<div class="t" style="left:184px;top:421.31px;font-size:7.9px;line-height:7.9px;color:#222;transform:scaleX(0.8544303797468354);transform-origin:0 0;">Quant. de Gavetas</div>
<div class="t" style="left:184px;top:438.31px;font-size:7.9px;line-height:7.9px;color:#222;transform:scaleX(0.8544303797468354);transform-origin:0 0;">Último Sepultado</div>
<div style="position:absolute;left:263px;top:311px;width:40px;height:14px;background:#fff;border:1px solid #c8c8c8;box-sizing:border-box"></div>
<div class="t b" style="right:499px;top:315.61px;font-size:7.9px;line-height:7.9px;color:#2222a8;transform:scaleX(0.9018987341772151);transform-origin:100% 0;">1</div>
<div style="position:absolute;left:304px;top:300px;width:77px;height:30px;overflow:hidden">
<div class="t b" style="left:0.5px;top:15.31px;font-size:7.9px;line-height:7.9px;color:#2222a8;transform:scaleX(0.7879746835443037);transform-origin:0 0;">JAZIGO VERTICAL INTERIOR</div>
</div>
<div style="position:absolute;left:263px;top:329px;width:78px;height:14px;background:#fff;border:1px solid #c8c8c8;box-sizing:border-box"></div>
<div style="position:absolute;left:263px;top:346px;width:78px;height:14px;background:#fff;border:1px solid #c8c8c8;box-sizing:border-box"></div>
<div class="t b" style="right:460.5px;top:350.61px;font-size:7.9px;line-height:7.9px;color:#2222a8;transform:scaleX(0.9018987341772151);transform-origin:100% 0;">1.111,33</div>
<div style="position:absolute;left:263px;top:364px;width:78px;height:14px;background:#fff;border:1px solid #c8c8c8;box-sizing:border-box"></div>
<div class="t b" style="right:460.5px;top:368.61px;font-size:7.9px;line-height:7.9px;color:#2222a8;transform:scaleX(0.9018987341772151);transform-origin:100% 0;">0,00</div>
<div style="position:absolute;left:263px;top:382px;width:78px;height:14px;background:#fff;border:1px solid #c8c8c8;box-sizing:border-box"></div>
<div class="t b" style="right:460.5px;top:386.61px;font-size:7.9px;line-height:7.9px;color:#2222a8;transform:scaleX(0.9018987341772151);transform-origin:100% 0;">0,00</div>
<div style="position:absolute;left:263px;top:399px;width:78px;height:14px;background:#fff;border:1px solid #c8c8c8;box-sizing:border-box"></div>
<div class="t b" style="right:460.5px;top:403.61px;font-size:7.9px;line-height:7.9px;color:#2222a8;transform:scaleX(0.9018987341772151);transform-origin:100% 0;">0,000000000000</div>
<div style="position:absolute;left:263px;top:417px;width:40px;height:14px;background:#ececf4;border:1px solid #c8c8c8;box-sizing:border-box"></div>
<div class="t b" style="right:499px;top:421.61px;font-size:7.9px;line-height:7.9px;color:#2222a8;transform:scaleX(0.9018987341772151);transform-origin:100% 0;">1</div>
<div style="position:absolute;left:263px;top:434px;width:40px;height:14px;background:#fff;border:1px solid #c8c8c8;box-sizing:border-box"></div>
<div class="t" style="left:385px;top:315.31px;font-size:7.9px;line-height:7.9px;color:#222;transform:scaleX(0.8544303797468354);transform-origin:0 0;">Tipo de Unidade</div>
<div class="t" style="left:385px;top:333.31px;font-size:7.9px;line-height:7.9px;color:#222;transform:scaleX(0.8544303797468354);transform-origin:0 0;">Material</div>
<div class="t" style="left:385px;top:350.31px;font-size:7.9px;line-height:7.9px;color:#222;transform:scaleX(0.8544303797468354);transform-origin:0 0;">Preço Temporário Imediato</div>
<div class="t" style="left:385px;top:368.31px;font-size:7.9px;line-height:7.9px;color:#222;transform:scaleX(0.8544303797468354);transform-origin:0 0;">Preço Perpétuo Imediato</div>
<div class="t" style="left:385px;top:386.31px;font-size:7.9px;line-height:7.9px;color:#222;transform:scaleX(0.8544303797468354);transform-origin:0 0;">Largura</div>
<div class="t" style="left:385px;top:403.31px;font-size:7.9px;line-height:7.9px;color:#222;transform:scaleX(0.8544303797468354);transform-origin:0 0;">Longitude</div>
<div class="t" style="left:385px;top:421.31px;font-size:7.9px;line-height:7.9px;color:#222;transform:scaleX(0.8544303797468354);transform-origin:0 0;">Quant. de Restos Mortais</div>
<div style="position:absolute;left:473px;top:311px;width:40px;height:14px;background:#fff;border:1px solid #c8c8c8;box-sizing:border-box"></div>
<div class="t b" style="right:288.5px;top:315.61px;font-size:7.9px;line-height:7.9px;color:#2222a8;transform:scaleX(0.9018987341772151);transform-origin:100% 0;">1</div>
<div class="t b" style="left:516.5px;top:315.31px;font-size:7.9px;line-height:7.9px;color:#2222a8;transform:scaleX(0.7879746835443037);transform-origin:0 0;">JAZIGO VERTICAL</div>
<div style="position:absolute;left:473px;top:329px;width:79px;height:14px;background:#ececf4;border:1px solid #c8c8c8;box-sizing:border-box"></div>
<div class="t b" style="left:475.5px;top:333.61px;font-size:7.9px;line-height:7.9px;color:#2222a8;transform:scaleX(0.9018987341772151);transform-origin:0 0;">80.001.000038</div>
<div class="t b" style="left:554px;top:333.31px;font-size:7.9px;line-height:7.9px;color:#2222a8;transform:scaleX(0.7879746835443037);transform-origin:0 0;">JAZIGO VERTICAL</div>
<div style="position:absolute;left:473px;top:346px;width:79px;height:14px;background:#fff;border:1px solid #c8c8c8;box-sizing:border-box"></div>
<div class="t b" style="right:249.5px;top:350.61px;font-size:7.9px;line-height:7.9px;color:#2222a8;transform:scaleX(0.9018987341772151);transform-origin:100% 0;">366,00</div>
<div style="position:absolute;left:473px;top:364px;width:79px;height:14px;background:#fff;border:1px solid #c8c8c8;box-sizing:border-box"></div>
<div class="t b" style="right:249.5px;top:368.61px;font-size:7.9px;line-height:7.9px;color:#2222a8;transform:scaleX(0.9018987341772151);transform-origin:100% 0;">5.555,00</div>
<div style="position:absolute;left:473px;top:382px;width:79px;height:14px;background:#fff;border:1px solid #c8c8c8;box-sizing:border-box"></div>
<div class="t b" style="right:249.5px;top:386.61px;font-size:7.9px;line-height:7.9px;color:#2222a8;transform:scaleX(0.9018987341772151);transform-origin:100% 0;">0,00</div>
<div style="position:absolute;left:473px;top:399px;width:79px;height:14px;background:#fff;border:1px solid #c8c8c8;box-sizing:border-box"></div>
<div class="t b" style="right:249.5px;top:403.61px;font-size:7.9px;line-height:7.9px;color:#2222a8;transform:scaleX(0.9018987341772151);transform-origin:100% 0;">0,000000000000</div>
<div style="position:absolute;left:473px;top:417px;width:40px;height:14px;background:#ececf4;border:1px solid #c8c8c8;box-sizing:border-box"></div>
<div class="t b" style="right:288.5px;top:421.61px;font-size:7.9px;line-height:7.9px;color:#2222a8;transform:scaleX(0.9018987341772151);transform-origin:100% 0;">0</div>
<div class="t" style="left:587.5px;top:315.31px;font-size:7.9px;line-height:7.9px;color:#222;transform:scaleX(0.8544303797468354);transform-origin:0 0;">Área de Vinculação</div>
<div style="position:absolute;left:666px;top:311px;width:40px;height:14px;background:#fff;border:1px solid #c8c8c8;box-sizing:border-box"></div>
<div class="t b" style="right:95.5px;top:315.61px;font-size:7.9px;line-height:7.9px;color:#2222a8;transform:scaleX(0.9018987341772151);transform-origin:100% 0;">1</div>
<div class="t b" style="left:708.5px;top:315.31px;font-size:7.9px;line-height:7.9px;color:#2222a8;transform:scaleX(0.7879746835443037);transform-origin:0 0;">MEMORIAL DO LAGO</div>
<div class="t" style="left:587.5px;top:368.31px;font-size:7.9px;line-height:7.9px;color:#222;transform:scaleX(0.8544303797468354);transform-origin:0 0;">Contratação Atual</div>
<div style="position:absolute;left:666px;top:364px;width:79px;height:13px;background:#e1e1e1;border:1px solid #bcbcbc;box-sizing:border-box"></div>
<div class="t" style="left:669px;top:368.31px;font-size:7.9px;line-height:7.9px;color:#111;transform:scaleX(0.8544303797468354);transform-origin:0 0;">Temporário</div>
<svg style="position:absolute;left:736px;top:369px" width="6" height="4" viewBox="0 0 6 4"><path d="M0.5 0.8 L3 3.2 L5.5 0.8" stroke="#505050" stroke-width="0.9" fill="none"/></svg>
<div class="t" style="left:587.5px;top:386.31px;font-size:7.9px;line-height:7.9px;color:#222;transform:scaleX(0.8544303797468354);transform-origin:0 0;">Comprimento</div>
<div class="t" style="left:587.5px;top:403.31px;font-size:7.9px;line-height:7.9px;color:#222;transform:scaleX(0.8544303797468354);transform-origin:0 0;">Processo</div>
<div class="t" style="left:587.5px;top:421.31px;font-size:7.9px;line-height:7.9px;color:#222;transform:scaleX(0.8544303797468354);transform-origin:0 0;">Orçamento</div>
<div class="t" style="left:587.5px;top:438.31px;font-size:7.9px;line-height:7.9px;color:#222;transform:scaleX(0.8544303797468354);transform-origin:0 0;">Contrato</div>
<div style="position:absolute;left:666px;top:382px;width:79px;height:14px;background:#fff;border:1px solid #c8c8c8;box-sizing:border-box"></div>
<div class="t b" style="right:56.5px;top:386.61px;font-size:7.9px;line-height:7.9px;color:#2222a8;transform:scaleX(0.9018987341772151);transform-origin:100% 0;">0,00</div>
<div style="position:absolute;left:666px;top:399px;width:79px;height:14px;background:#fff;border:1px solid #c8c8c8;box-sizing:border-box"></div>
<div style="position:absolute;left:666px;top:417px;width:79px;height:14px;background:#fff;border:1px solid #c8c8c8;box-sizing:border-box"></div>
<div style="position:absolute;left:666px;top:434px;width:40px;height:14px;background:#fff;border:1px solid #c8c8c8;box-sizing:border-box"></div>
<div class="t b" style="left:667.2px;top:438.61px;font-size:7.9px;line-height:7.9px;color:#2222a8;transform:scaleX(0.9018987341772151);transform-origin:0 0;">0003562</div>
<div style="position:absolute;left:708px;top:425px;width:78px;height:20px;overflow:hidden">
<div class="t b" style="left:0px;top:13.31px;font-size:7.9px;line-height:7.9px;color:#2222a8;transform:scaleX(0.7879746835443037);transform-origin:0 0;">PARCELA UNIDADE TEMPORARIA</div>
</div>
<div class="t" style="left:184px;top:456.31px;font-size:7.9px;line-height:7.9px;color:#222;transform:scaleX(0.8544303797468354);transform-origin:0 0;">Observação</div>
<div style="position:absolute;left:263px;top:452px;width:524px;height:104px;background:#fff;border:1px solid #c8c8c8;box-sizing:border-box"></div>
<div style="position:absolute;left:736px;top:565px;width:54px;height:14px;background:#e1e1e1;border:1px solid #b6b6b6;box-sizing:border-box"></div>
<div class="t" style="left:748.5px;top:568.81px;font-size:7.9px;line-height:7.9px;color:#111;transform:scaleX(0.7917721518987342);transform-origin:0 0;">Confirmar</div>
<div style="position:absolute;left:749px;top:575px;width:4px;height:1px;background:#444"></div>
</body></html>
